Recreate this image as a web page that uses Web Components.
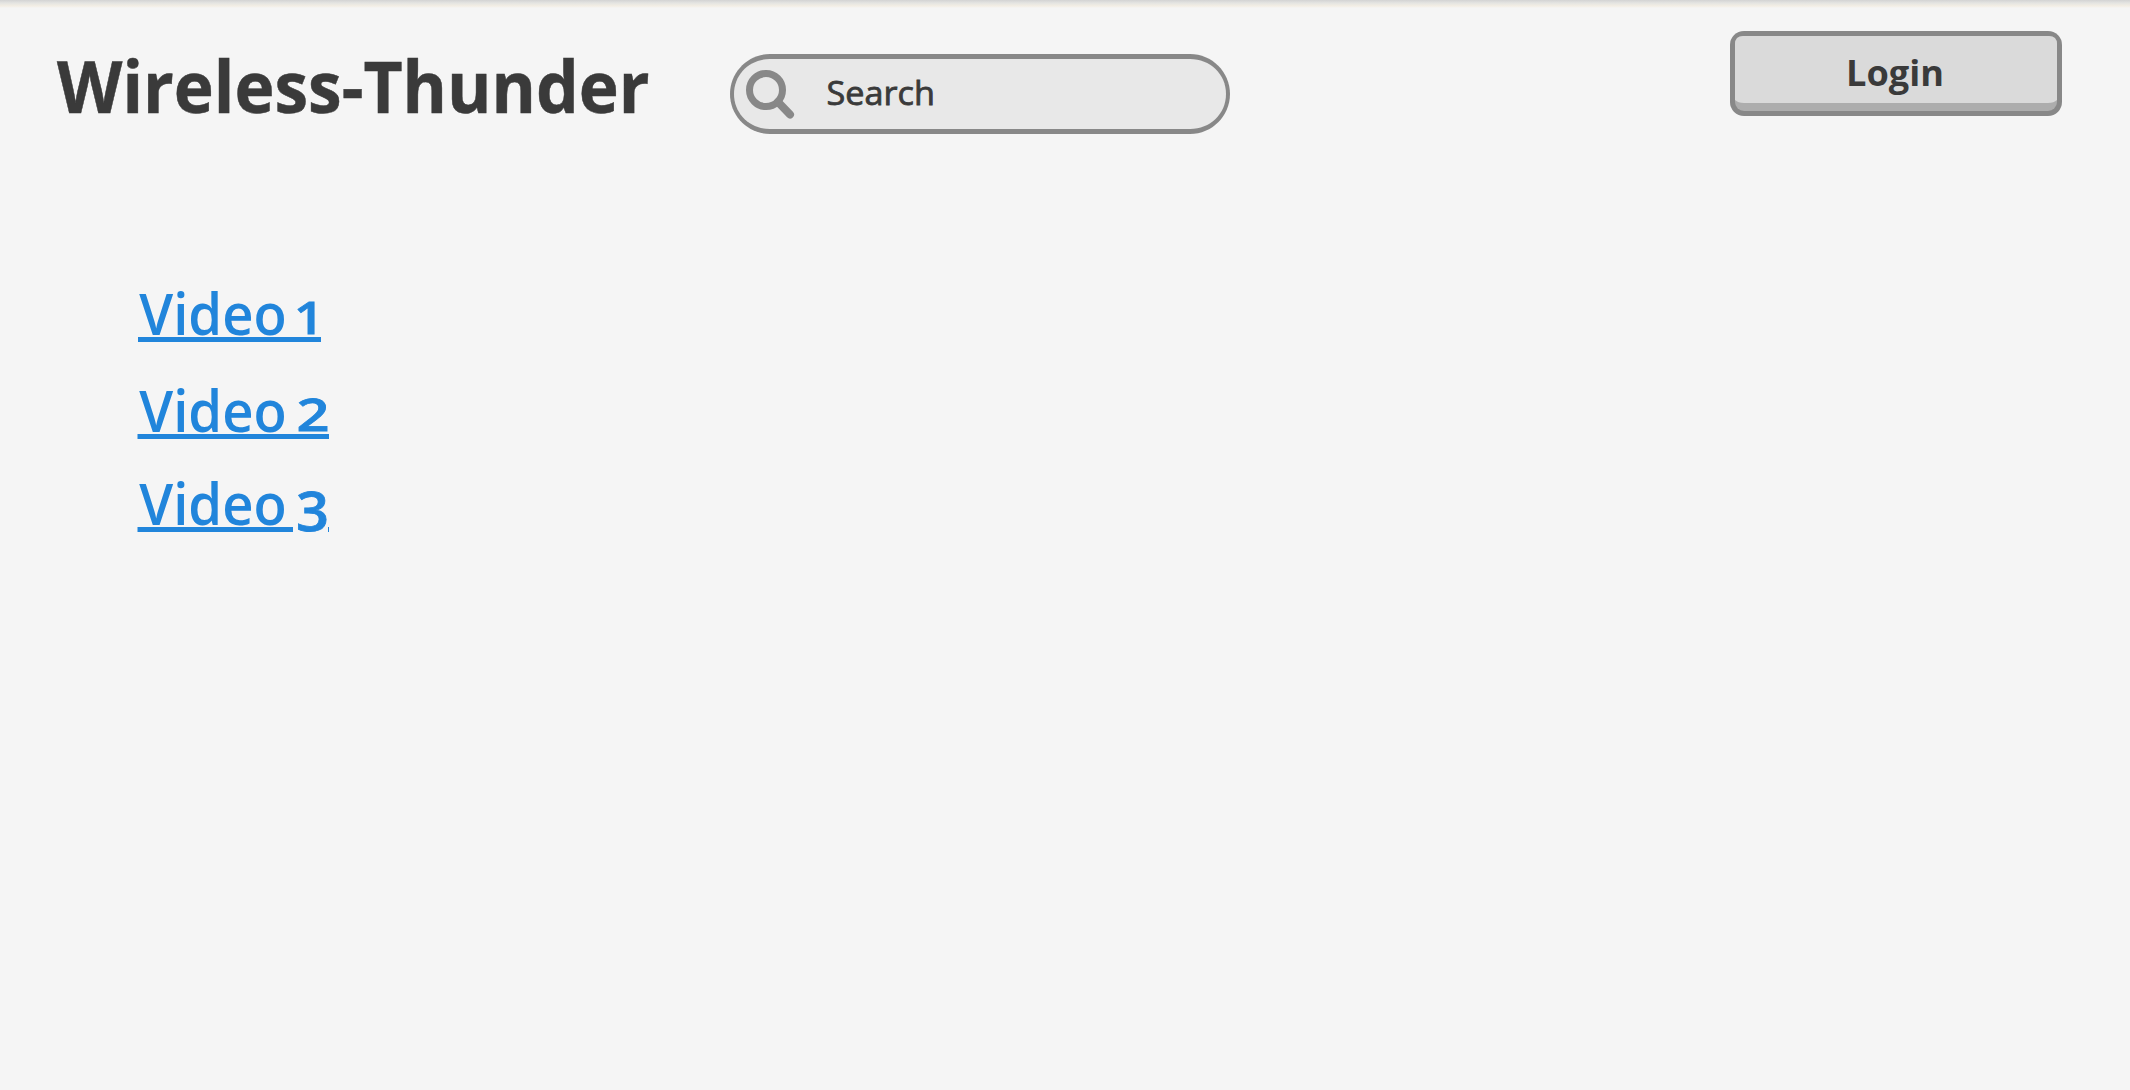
<!DOCTYPE html>
<html lang="en">
<head>
<meta charset="utf-8">
<title>Wireless-Thunder</title>
<style>
html, body { margin: 0; height: 100%; }
body { background: #f5f5f5; overflow: hidden; font-family: "Open Sans", "Noto Sans", sans-serif; color: #3a3a3a; }
</style>
</head>
<body>
<wt-app></wt-app>
<script>
class WtTitle extends HTMLElement {
  constructor() {
    super();
    this.attachShadow({ mode: 'open' }).innerHTML = `
<style>
:host { display: block; width: 600px; height: 100px; }
h1 { margin: 0; font-size: inherit; }
svg { display: block; overflow: visible; }
text { font-weight: 700; font-size: 72px; fill: #3a3a3a; stroke: #3a3a3a; stroke-width: .5px; }
</style>
<h1><svg width="600" height="100"><text x="1" y="82.7" textLength="592.5" lengthAdjust="spacingAndGlyphs">${this.getAttribute('label')}</text></svg></h1>`;
  }
}
class WtSearch extends HTMLElement {
  constructor() {
    super();
    this.attachShadow({ mode: 'open' }).innerHTML = `
<style>
:host { display: block; width: 500px; height: 80px; }
svg { display: block; overflow: visible; }
text { font-weight: 500; font-size: 32.5px; fill: #3a3a3a; stroke: #3a3a3a; stroke-width: .8px; }
</style>
<svg width="500" height="80">
<path fill="#888" d="M40 0H460C482 0 500 18 500 40S482 80 460 80H40C18 80 0 62 0 40S18 0 40 0Z"/>
<path fill="#e8e8e8" d="M40 5H460C480 5 496 20 496 40S480 75 460 75H40C20 75 4 60 4 40S20 5 40 5Z"/>
<circle cx="36" cy="36" r="16.5" fill="none" stroke="#888" stroke-width="7"/>
<path d="M48 48L60 60.5" stroke="#888" stroke-width="8" stroke-linecap="round"/>
<text x="96.5" y="50.7" textLength="108.5" lengthAdjust="spacingAndGlyphs">${this.getAttribute('placeholder')}</text>
</svg>`;
  }
}
class WtButton extends HTMLElement {
  constructor() {
    super();
    this.attachShadow({ mode: 'open' }).innerHTML = `
<style>
:host { display: block; width: 332px; height: 85px; }
svg { display: block; overflow: visible; }
text { font-weight: 700; font-size: 36px; fill: #3a3a3a; }
</style>
<svg width="332" height="85">
<rect width="332" height="85" rx="14" fill="#888"/>
<rect x="5" y="5" width="322" height="75" rx="9" fill="#adadad"/>
<path fill="#dadada" d="M13 5H319Q327 5 327 13V69Q324 72 318 72H14Q8 72 5 69V13Q5 5 13 5Z"/>
<text x="116" y="54.7" textLength="98" lengthAdjust="spacingAndGlyphs">${this.getAttribute('label')}</text>
</svg>`;
  }
}
class WtLink extends HTMLElement {
  constructor() {
    super();
    const n = this.getAttribute('number');
    // Old-style figures: 1 and 2 sit at x-height, 3 drops below the baseline.
    const digit = {
      1: { x: 157, y: 46, size: 45, length: 30, lines: 'M1 51.5H184' },
      2: { x: 159.5, y: 46, size: 46, length: 33, lines: 'M0.5 51.5H192' },
      3: { x: 159, y: 52.5, size: 55, length: 33, lines: 'M0.5 51.5H156M191 51.5H192' }
    }[n];
    this.attachShadow({ mode: 'open' }).innerHTML = `
<style>
:host { display: block; width: 200px; height: 60px; }
svg { display: block; overflow: visible; }
text { font-weight: 600; font-size: 57px; fill: #2185db; }
.figure { stroke: #2185db; stroke-width: .8px; }
path { stroke: #2185db; stroke-width: 5; }
</style>
<a><svg width="200" height="60">
<text y="46.5"><tspan x="2.3" textLength="147.5" lengthAdjust="spacingAndGlyphs">Video</tspan> <tspan class="figure" x="${digit.x}" y="${digit.y}" font-size="${digit.size}" textLength="${digit.length}" lengthAdjust="spacingAndGlyphs">${n}</tspan></text>
<path d="${digit.lines}"/>
</svg></a>`;
  }
}
class WtApp extends HTMLElement {
  constructor() {
    super();
    this.attachShadow({ mode: 'open' }).innerHTML = `
<style>
:host { display: block; height: 1090px; background: linear-gradient(#d3d3d3 0, #e4e4e2 3px, #f3eee4 6px, #f5f5f5 8px); }
header { display: flex; align-items: flex-start; padding: 30px 68px 0 56px; height: 110px; }
wt-search { margin: 24px 0 0 74px; }
wt-button { margin: 1.4px 0 0 auto; }
nav { display: flex; flex-direction: column; padding: 148px 0 0 137px; }
wt-link + wt-link { margin-top: 37px; }
wt-link:last-child { margin-top: 33px; }
</style>
<header><wt-title label="Wireless-Thunder"></wt-title><wt-search placeholder="Search"></wt-search><wt-button label="Login"></wt-button></header>
<nav><wt-link number="1"></wt-link><wt-link number="2"></wt-link><wt-link number="3"></wt-link></nav>`;
  }
}
customElements.define('wt-title', WtTitle);
customElements.define('wt-search', WtSearch);
customElements.define('wt-button', WtButton);
customElements.define('wt-link', WtLink);
customElements.define('wt-app', WtApp);
</script>
</body>
</html>
